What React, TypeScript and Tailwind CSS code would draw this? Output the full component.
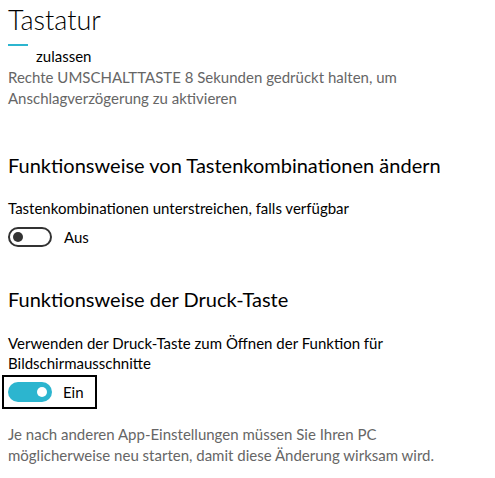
import React from "react";

function Toggle({ on }: { on: boolean }) {
  if (on) {
    return (
      <div className="w-[44px] h-[20px] rounded-full bg-[#2cb5cf] flex items-center justify-end pr-[5px] shrink-0">
        <div className="w-[10px] h-[10px] rounded-full bg-white" />
      </div>
    );
  }
  return (
    <div className="w-[44px] h-[20px] rounded-full border-2 border-[#333333] flex items-center pl-[3px] shrink-0">
      <div className="w-[10px] h-[10px] rounded-full bg-[#333333]" />
    </div>
  );
}

export default function App() {
  return (
    <div
      className="w-[495px] h-[478px] bg-white overflow-hidden pl-2 text-black"
      style={{ fontFamily: 'Lato, "Noto Sans", sans-serif' }}
    >
      <div className="mt-[2px] text-[27px] leading-[36px] font-light">Tastatur</div>
      <div className="flex items-start h-[28px]">
        <div className="mt-[6px] w-[20px] h-[2px] bg-[#2cb5cf]" />
        <div className="mt-[8px] ml-[8px] text-[15px] leading-[20px]">zulassen</div>
      </div>
      <div className="mt-[1px] text-[15px] leading-[21px] text-[#666666]">
        Rechte UMSCHALTTASTE 8 Sekunden gedrückt halten, um
        <br />
        Anschlagverzögerung zu aktivieren
      </div>
      <div className="mt-[42px] text-[20px] leading-[28px]">
        Funktionsweise von Tastenkombinationen ändern
      </div>
      <div className="mt-[19px] text-[15px] leading-[20px]">
        Tastenkombinationen unterstreichen, falls verfügbar
      </div>
      <div className="mt-[9px] flex items-center gap-[12px]">
        <Toggle on={false} />
        <span className="text-[15px] leading-[20px]">Aus</span>
      </div>
      <div className="mt-[38px] text-[20px] leading-[28px]">
        Funktionsweise der Druck-Taste
      </div>
      <div className="mt-[20px] text-[15px] leading-[20px]">
        Verwenden der Druck-Taste zum Öffnen der Funktion für
        <br />
        Bildschirmausschnitte
      </div>
      <div className="mt-[2px] -ml-[6px] w-[95px] h-[34px] border-2 border-black flex items-center gap-[11px] pl-[4px]">
        <Toggle on={true} />
        <span className="text-[15px] leading-[20px]">Ein</span>
      </div>
      <div className="mt-[15px] text-[15px] leading-[21px] text-[#666666]">
        Je nach anderen App-Einstellungen müssen Sie Ihren PC
        <br />
        möglicherweise neu starten, damit diese Änderung wirksam wird.
      </div>
    </div>
  );
}
